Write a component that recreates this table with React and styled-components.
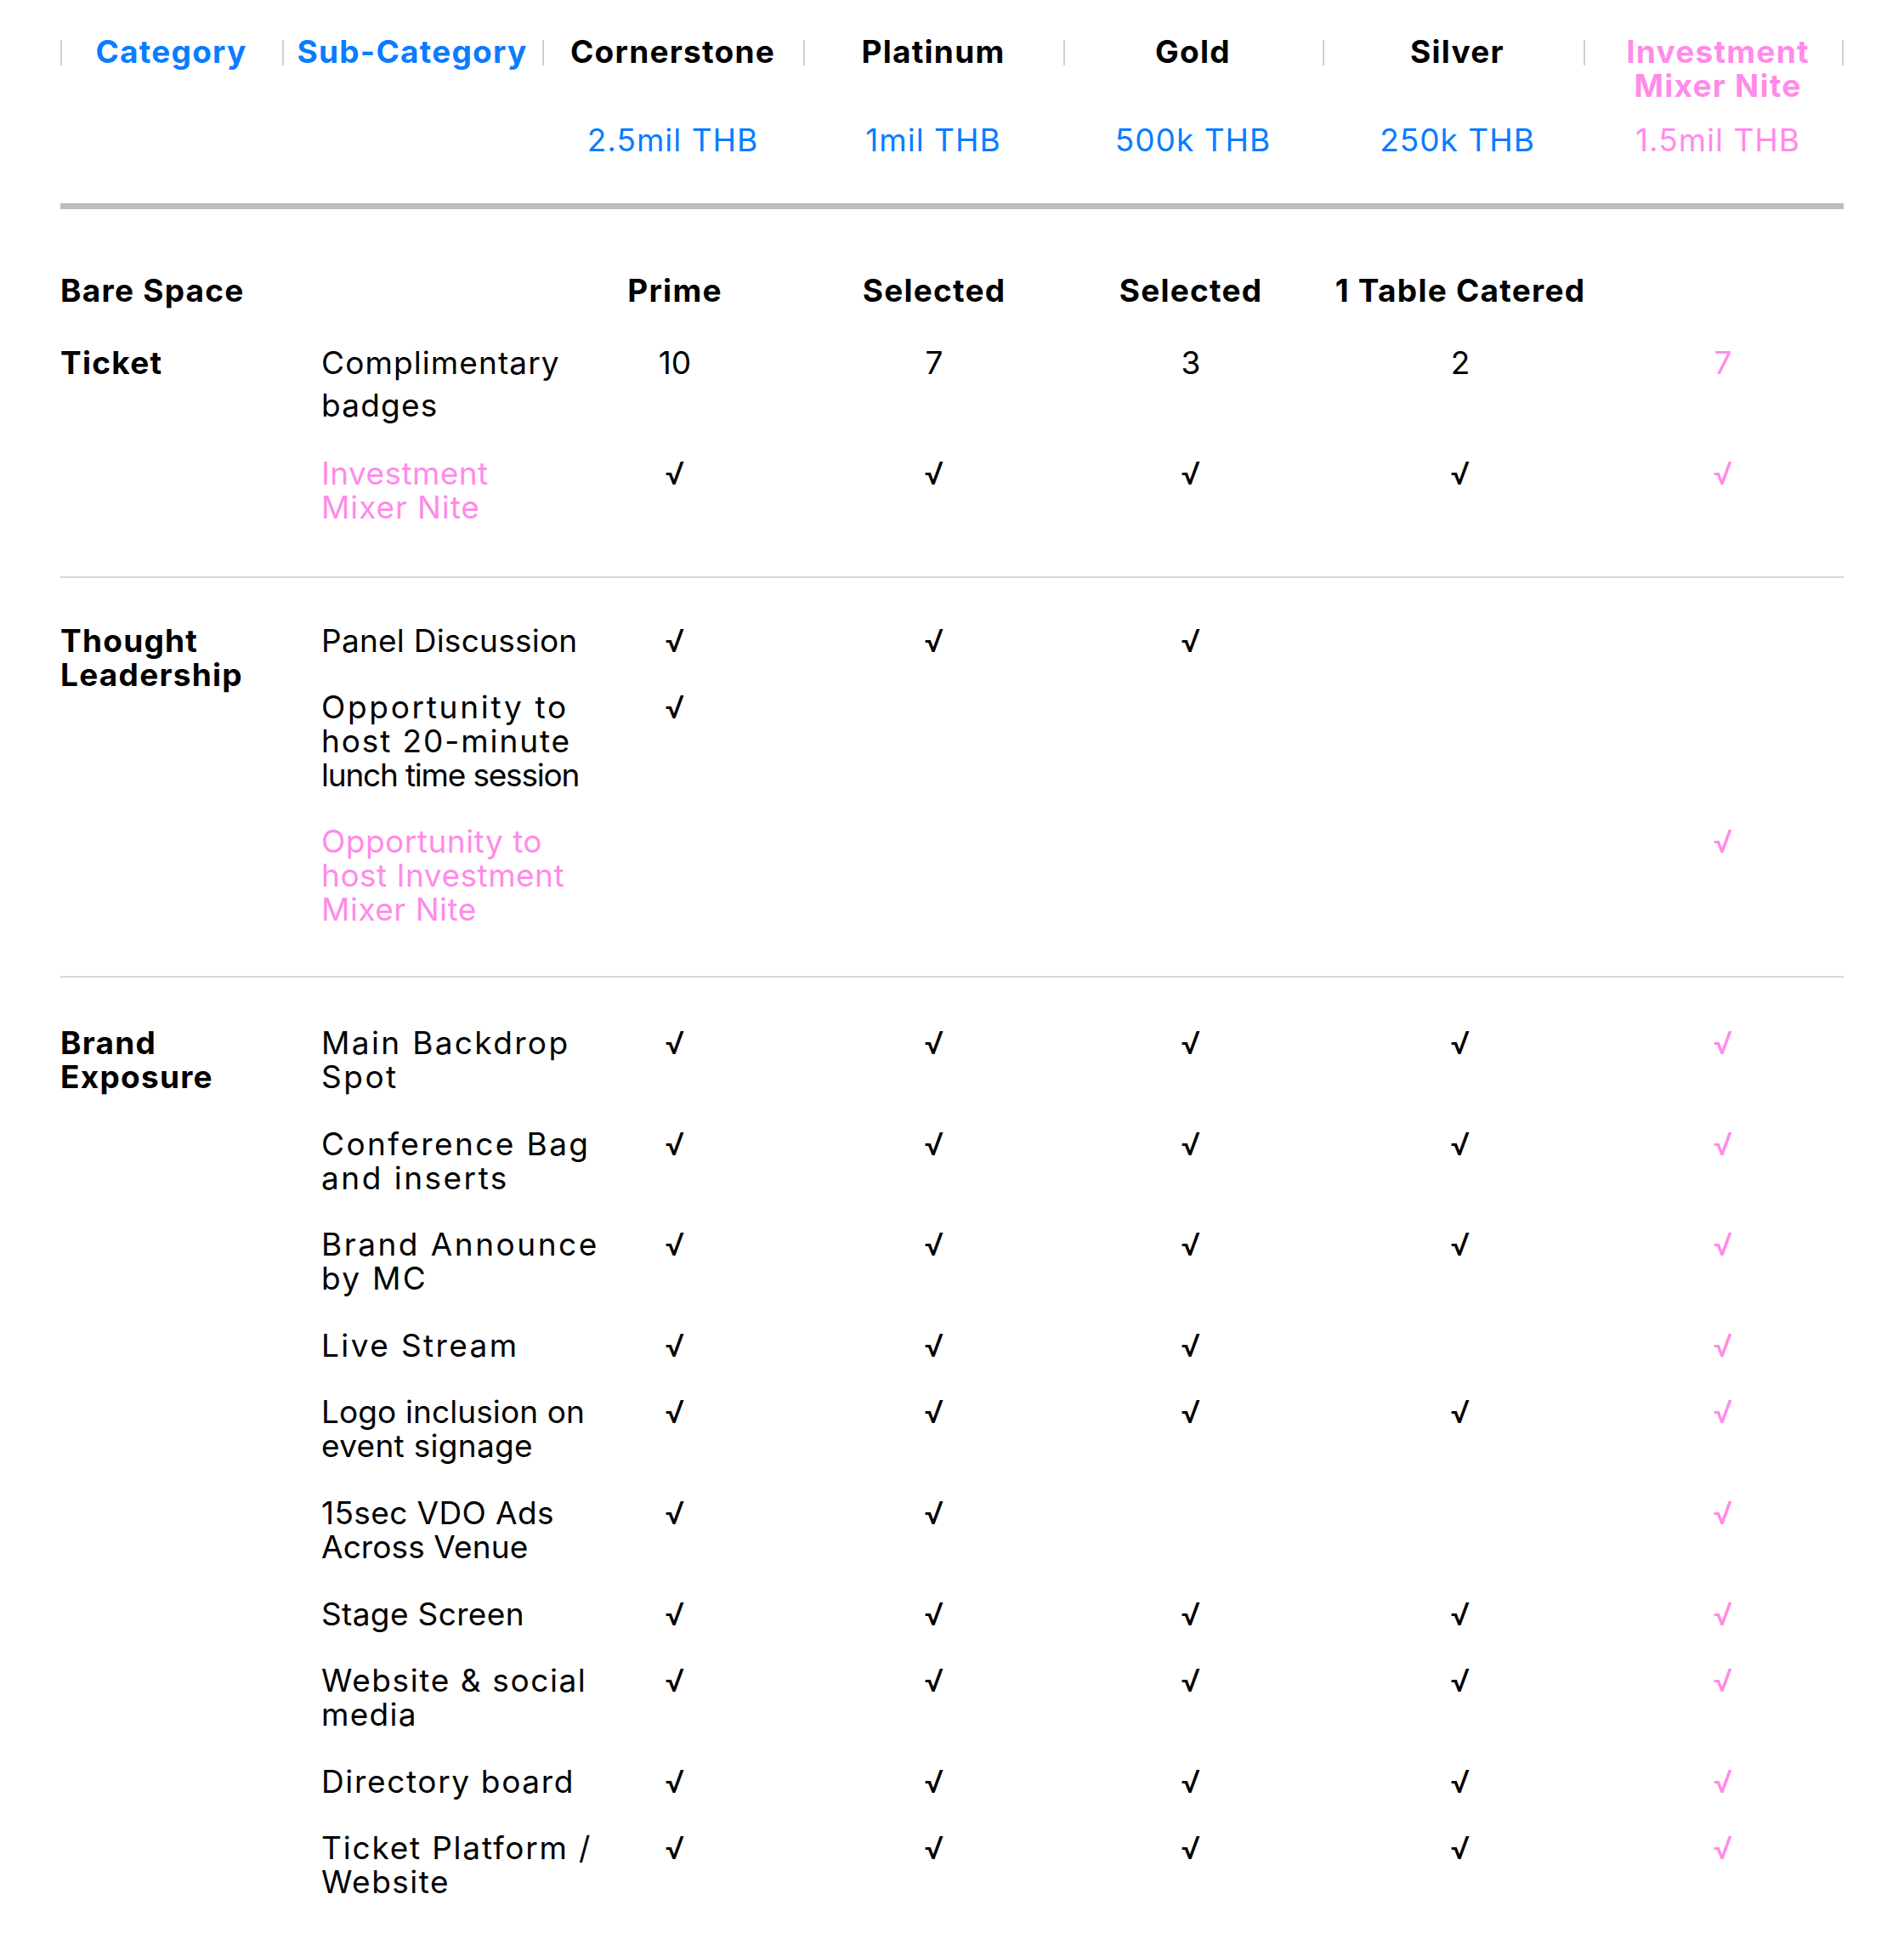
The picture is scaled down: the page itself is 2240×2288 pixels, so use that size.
import React from "react";
import styled, { createGlobalStyle } from "styled-components";

const BLUE = "#0a7cff";
const PINK = "#ff8be8";
const HEAD_COLS = "261px 306px 307px 306px 305px 307px 306px";
const ROW_COLS = "263px 306px 304px 300px 334px 284px";

const Global = createGlobalStyle`
  body {
    margin: 0;
    background: #fff;
    font-family: Inter, "Noto Sans", "Liberation Sans", sans-serif;
    font-size: 37px;
    line-height: 40px;
    color: #000;
  }
`;

const Page = styled.div`
  width: 2098px;
  padding: 41px 0 0 71px;
`;

const HeadGrid = styled.div`
  display: grid;
  grid-template-columns: ${HEAD_COLS};
  row-gap: 24px;
  align-items: start;
`;

const HeadCell = styled.div`
  position: relative;
  text-align: center;
  font-weight: 700;
  letter-spacing: 1.25px;
  color: ${(p) => p.$color};
  padding-left: ${(p) => (p.$shift ? "10px" : "0")};

  &::before,
  &::after {
    content: "";
    position: absolute;
    top: 6px;
    width: 2px;
    height: 30px;
    background: #cfcfcf;
  }
  &::before {
    left: 0;
  }
  &::after {
    right: 0;
    display: ${(p) => (p.$last ? "block" : "none")};
  }
`;

const Price = styled.div`
  text-align: center;
  font-weight: 400;
  letter-spacing: 1px;
  color: ${(p) => p.$color};
  padding-left: ${(p) => (p.$shift ? "10px" : "0")};
`;

const ThickBar = styled.div`
  margin-top: 54px;
  height: 7px;
  background: #bebebe;
`;

const Section = styled.section`
  display: flex;
  flex-direction: column;
  gap: ${(p) => p.$gap}px;
  padding: ${(p) => p.$top}px 0 ${(p) => p.$bottom}px;
  border-bottom: ${(p) => (p.$rule ? "2px solid #d6d6d6" : "none")};
`;

const Group = styled.div`
  display: flex;
  align-items: flex-start;
`;

const Category = styled.div`
  flex: 0 0 307px;
  font-weight: 700;
  letter-spacing: 1.25px;
  line-height: ${(p) => (p.$tall ? "50px" : "40px")};
`;

const Rows = styled.div`
  display: flex;
  flex-direction: column;
  gap: ${(p) => p.$gap}px;
`;

const Row = styled.div`
  display: grid;
  grid-template-columns: ${ROW_COLS};
  align-items: start;
  line-height: ${(p) => (p.$tall ? "50px" : "40px")};
`;

const Sub = styled.div`
  width: 345px;
  color: ${(p) => (p.$pink ? PINK : "#000")};
`;

const Line = styled.span`
  display: block;
  white-space: nowrap;
  letter-spacing: ${(p) => p.$ls ?? 0.5}px;
`;

const Value = styled.div`
  text-align: center;
  font-weight: ${(p) => (p.$bold ? 700 : 400)};
  letter-spacing: ${(p) => (p.$bold ? "1.25px" : "0")};
  color: ${(p) => (p.$pink ? PINK : "#000")};
  white-space: nowrap;
`;

const tiers = [
  { name: ["Category"], color: BLUE },
  { name: ["Sub-Category"], color: BLUE },
  { name: ["Cornerstone"], price: "2.5mil THB" },
  { name: ["Platinum"], price: "1mil THB" },
  { name: ["Gold"], price: "500k THB" },
  { name: ["Silver"], price: "250k THB", shift: true },
  { name: ["Investment", "Mixer Nite"], price: "1.5mil THB", pink: true, shift: true },
];

const C = "√";
const ALL = [C, C, C, C, C];

const sections = [
  {
    top: 76,
    bottom: 61,
    gap: 40,
    rowGap: 35,
    rule: true,
    groups: [
      {
        cat: ["Bare Space"],
        rows: [{ sub: [], values: ["Prime", "Selected", "Selected", "1 Table Catered", ""], bold: true }],
      },
      {
        cat: ["Ticket"],
        tall: true,
        rows: [
          { sub: [["Complimentary", 1.1], ["badges", 1.2]], values: ["10", "7", "3", "2", "7"], tall: true },
          { sub: [["Investment", 0.4], ["Mixer Nite", 0.9]], pink: true, values: ALL },
        ],
      },
    ],
  },
  {
    top: 54,
    bottom: 58,
    gap: 38,
    rowGap: 38,
    rule: true,
    groups: [
      {
        cat: ["Thought", "Leadership"],
        rows: [
          { sub: [["Panel Discussion", 0.25]], values: [C, C, C, "", ""] },
          { sub: [["Opportunity to", 2.7], ["host 20-minute", 1.9], ["lunch time session", -1.2]], values: [C, "", "", "", ""] },
          { sub: [["Opportunity to"], ["host Investment"], ["Mixer Nite"]], pink: true, values: ["", "", "", "", C] },
        ],
      },
    ],
  },
  {
    top: 57,
    bottom: 60,
    gap: 38.6,
    rowGap: 38.6,
    groups: [
      {
        cat: ["Brand", "Exposure"],
        rows: [
          { sub: [["Main Backdrop", 2.35], ["Spot", 2.5]], values: ALL },
          { sub: [["Conference Bag", 2.4], ["and inserts", 2.5]], values: ALL },
          { sub: [["Brand Announce", 2.5], ["by MC", 2.3]], values: ALL },
          { sub: [["Live Stream", 2.4]], values: [C, C, C, "", C] },
          { sub: [["Logo inclusion on", 0.1], ["event signage", 0.3]], values: ALL },
          { sub: [["15sec VDO Ads", 0.4], ["Across Venue", 0.1]], values: [C, C, "", "", C] },
          { sub: [["Stage Screen", 0.35]], values: ALL },
          { sub: [["Website & social", 1.6], ["media", 1.3]], values: ALL },
          { sub: [["Directory board", 1.65]], values: ALL },
          { sub: [["Ticket Platform /", 1.8], ["Website", 1.5]], values: ALL },
        ],
      },
    ],
  },
];

const Header = () => (
  <HeadGrid>
    {tiers.map((t, i) => (
      <HeadCell
        key={t.name[0]}
        $color={t.color || (t.pink ? PINK : "#000")}
        $shift={t.shift}
        $last={i === tiers.length - 1}
      >
        {t.name.map((n) => (
          <Line key={n} $ls={1.25}>
            {n}
          </Line>
        ))}
      </HeadCell>
    ))}
    {tiers.map((t) => (
      <Price key={"p" + t.name[0]} $color={t.pink ? PINK : BLUE} $shift={t.shift}>
        {t.price || ""}
      </Price>
    ))}
  </HeadGrid>
);

const BodyRow = ({ row }) => (
  <Row $tall={row.tall}>
    <Sub $pink={row.pink}>
      {row.sub.map(([text, ls]) => (
        <Line key={text} $ls={ls}>
          {text}
        </Line>
      ))}
    </Sub>
    {row.values.map((v, i) => (
      <Value key={i} $bold={row.bold} $pink={i === 4}>
        {v}
      </Value>
    ))}
  </Row>
);

export default function App() {
  return (
    <>
      <Global />
      <Page>
        <Header />
        <ThickBar />
        {sections.map((s, i) => (
          <Section key={i} $top={s.top} $bottom={s.bottom} $gap={s.gap} $rule={s.rule}>
            {s.groups.map((g) => (
              <Group key={g.cat[0]}>
                <Category $tall={g.tall}>
                  {g.cat.map((c) => (
                    <Line key={c} $ls={1.25}>
                      {c}
                    </Line>
                  ))}
                </Category>
                <Rows $gap={s.rowGap}>
                  {g.rows.map((r, j) => (
                    <BodyRow key={j} row={r} />
                  ))}
                </Rows>
              </Group>
            ))}
          </Section>
        ))}
      </Page>
    </>
  );
}
